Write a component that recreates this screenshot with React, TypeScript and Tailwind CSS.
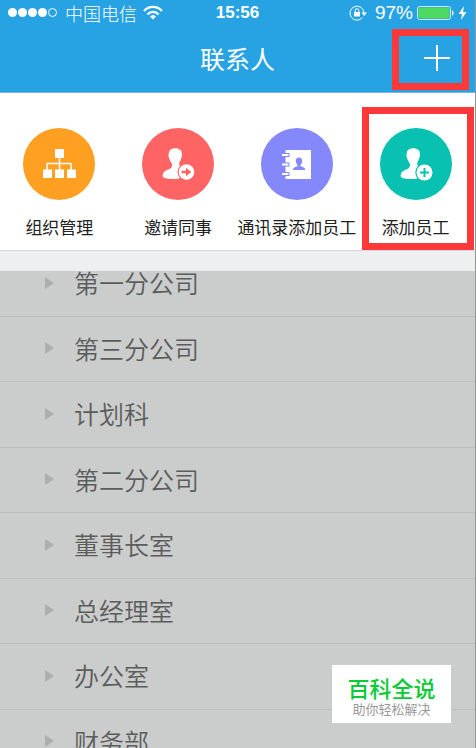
import type { ReactNode } from 'react';

type Action = {
  label: string;
  color: string;
  icon: ReactNode;
  marked?: boolean;
};

const personPath =
  'M20 8.500c2-.8 4-.2 5 .8 2 .2 3 2 2.700 4.500.6 1 .5 2.500-.3 3.500-.3 2-1 3.500-2 4.700-.4 2 0 4 1.600 5.500l2 3-1 5c-2 3-4 3.500-8 3.500-4 0-8-.2-10.500-1.500-1.500-1-1-3.500.5-5.500 2-2 5-2.500 7-4 1.500-1.500 1.200-4 .3-5.500-1.300-1.500-1.900-3-2.200-5-.8-1-.9-2.500-.3-3.500-.3-3 1.700-5.500 5.200-5.500z';

function OrgIcon() {
  return (
    <svg viewBox="0 0 48 48" className="size-12" aria-hidden="true">
      <path d="M24.500 17v13M12 30v-6.500h24V30" fill="none" stroke="#fff" strokeWidth="1.500" />
      <path d="M20 9h9v9h-9zM8 29.500h9V38H8zM20 29.500h9V38h-9zM32 29.500h9V38h-9z" fill="#fff" />
    </svg>
  );
}

function InviteIcon() {
  return (
    <svg viewBox="0 0 48 48" className="size-12" aria-hidden="true">
      <path d={personPath} fill="#fff" />
      <circle cx="32.500" cy="32" r="9" fill="#ff6464" />
      <circle cx="32.500" cy="32" r="7.800" fill="#fff" />
      <path d="M27.500 30.800h4.500v-3l5.300 4.200-5.300 4.200v-3h-4.500z" fill="#ff6464" />
    </svg>
  );
}

function AddressBookIcon() {
  return (
    <svg viewBox="0 0 48 48" className="size-12" aria-hidden="true">
      <path d="M12.500 10H38v29H12.500z" fill="#fff" />
      <path d="M12 13h4.500v4H12zM12 22.500h4.500v4H12zM12 32h4.500v4H12z" fill="#8488fa" />
      <path d="M9 14h6.500v2H9zM9 23.500h6.500v2H9zM9 33h6.500v2H9z" fill="#fff" />
      <path
        d="M26 17.500c2.200 0 3.200 1.500 3.200 3.500 0 1.700-.7 3-1.700 4v1.300c2 .9 4.700 1 4.700 3.700H20c0-2.700 2.700-2.800 4.500-3.700V25c-1-1-1.700-2.300-1.700-4 0-2 1-3.500 3.200-3.500z"
        fill="#8488fa"
      />
    </svg>
  );
}

function AddIcon() {
  return (
    <svg viewBox="0 0 48 48" className="size-12" aria-hidden="true">
      <path d={personPath} fill="#fff" />
      <circle cx="32.500" cy="32.500" r="9.200" fill="#08c1b0" />
      <circle cx="32.500" cy="32.500" r="8" fill="#fff" />
      <path d="M32.500 28v9M28 32.500h9" stroke="#08c1b0" strokeWidth="2" />
    </svg>
  );
}

const actions: Action[] = [
  { label: '组织管理', color: 'bg-[#ffa022]', icon: <OrgIcon /> },
  { label: '邀请同事', color: 'bg-[#ff6464]', icon: <InviteIcon /> },
  { label: '通讯录添加员工', color: 'bg-[#8488fa]', icon: <AddressBookIcon /> },
  { label: '添加员工', color: 'bg-[#08c1b0]', icon: <AddIcon />, marked: true },
];

const departments = [
  '第一分公司',
  '第三分公司',
  '计划科',
  '第二分公司',
  '董事长室',
  '总经理室',
  '办公室',
  '财务部',
];

function StatusBar() {
  return (
    <div className="grid grid-cols-[1fr_auto_1fr] items-center h-6 px-2 text-white">
      <div className="flex items-center">
        <div className="flex gap-px">
          {[0, 1, 2, 3].map((dot) => (
            <span key={dot} className="size-[9px] rounded-full bg-white" />
          ))}
          <span className="size-[9px] rounded-full border border-white" />
        </div>
        <span className="ml-2 text-lg leading-6 font-light">中国电信</span>
        <svg viewBox="0 0 20 15" className="ml-1.5 w-5 h-4" fill="none" stroke="#fff" strokeWidth="2.200" aria-hidden="true">
          <path d="M1 5.500C6 0 14 0 19 5.500M4.500 9C7.500 5.500 12.500 5.500 15.500 9" />
          <path d="M7 11c2-2 4-2 6 0l-3 3z" fill="#fff" stroke="none" />
        </svg>
      </div>
      <span className="text-[17px] font-bold font-['Liberation_Sans','Noto_Sans_CJK_SC',sans-serif]">15:56</span>
      <div className="flex items-center justify-end">
        <svg viewBox="0 0 18 16" className="w-[18px] h-4" aria-hidden="true">
          <path d="M13.500 12.500a7 7 0 1 1 1.500-4.500" fill="none" stroke="#fff" />
          <path d="M12.500 7.500H18l-2.800 3.500zM5 7h6v4.500H5z" fill="#fff" />
          <path d="M6.200 7V5.500a1.800 1.800 0 0 1 3.600 0V7" fill="none" stroke="#fff" />
        </svg>
        <span className="ml-2 text-[19px] leading-6 font-['Liberation_Sans','Noto_Sans_CJK_SC',sans-serif]">97%</span>
        <svg viewBox="0 0 37 14" className="ml-1 w-[37px] h-3.5" aria-hidden="true">
          <rect x="0.500" y="0.500" width="33" height="13" rx="2" fill="none" stroke="#c9eaf0" />
          <rect x="1.500" y="1.500" width="31" height="11" rx="1" fill="#4cd964" />
          <path d="M35 4.500c2 0 2 5 0 5z" fill="#fff" />
        </svg>
        <svg viewBox="0 0 9 14" className="ml-1 w-[9px] h-3.5" aria-hidden="true">
          <path d="M6 0 0.500 8h3.500l-1 6L8.500 6H5z" fill="#fff" />
        </svg>
      </div>
    </div>
  );
}

export default function App() {
  return (
    <div className="relative h-screen flex flex-col overflow-hidden bg-[#cbcdcc] border-r border-[#929594] font-['Noto_Sans_CJK_SC',sans-serif]">
      <header className="shrink-0 bg-[#27a2e3] border-b border-[#7db4d0]">
        <StatusBar />
        <div className="grid grid-cols-[1fr_auto_1fr] items-start h-[68px] pt-[5px] text-white">
          <h1 className="col-start-2 mt-3 text-[25px] leading-[34px]">联系人</h1>
          <button
            type="button"
            aria-label="添加"
            className="justify-self-end mr-1.5 w-[77px] h-[61px] border-[7px] border-[#fd3838] flex items-center justify-end pr-3 pb-1"
          >
            <svg viewBox="0 0 26 26" className="size-[26px]" aria-hidden="true">
              <path d="M13 0v26M0 13h26" stroke="#fff" strokeWidth="2" />
            </svg>
          </button>
        </div>
      </header>

      <nav className="shrink-0 grid grid-cols-4 bg-white border-b border-[#d5d8da] pb-2">
        {actions.map((action) => (
          <div key={action.label} className="relative flex justify-center pt-[35px]">
            <button type="button" className="flex flex-col items-center">
              <span className={`size-[72px] rounded-full flex items-center justify-center ${action.color}`}>
                {action.icon}
              </span>
              <span className="mt-3 text-[17px] leading-[30px] whitespace-nowrap text-[#222]">
                {action.label}
              </span>
            </button>
            {action.marked && (
              <span className="absolute top-3.5 -bottom-2 left-1.5 right-px border-[7px] border-[#fd3838]" />
            )}
          </div>
        ))}
      </nav>

      <div className="shrink-0 h-5 bg-[#edeff1]" />

      <main className="flex-1 min-h-0 overflow-hidden">
        <ul className="-mt-5">
          {departments.map((name) => (
            <li key={name} className="h-[66px] even:h-[65px] border-b border-[#bcbebe]">
              <button
                type="button"
                className="w-full h-full flex items-center pl-[45px] pb-0.5 text-[25px] leading-none font-[350] text-[#5b5c5c]"
              >
                <svg viewBox="0 0 9 12" className="w-[9px] h-3 mr-5" aria-hidden="true">
                  <path d="M0 0l9 6-9 6z" fill="#adaeae" />
                </svg>
                {name}
              </button>
            </li>
          ))}
        </ul>
      </main>

      <aside className="absolute right-6 bottom-[25px] w-[119px] h-[58px] bg-white flex flex-col items-center pt-2">
        <p className="text-[22px] leading-7 font-medium text-[#09cb36]">百科全说</p>
        <p className="text-[13px] leading-4 text-[#999]">助你轻松解决</p>
      </aside>
    </div>
  );
}
